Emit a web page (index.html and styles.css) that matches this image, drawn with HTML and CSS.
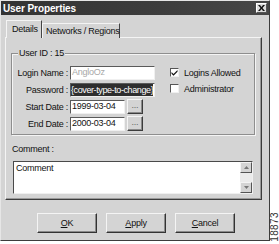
FILE: index.html
```html
<!DOCTYPE html>
<html>
<head>
<meta charset="utf-8">
<link rel="stylesheet" href="styles.css">
</head>
<body>
<div class="page">
  <div class="dialog">
    <div class="titlebar">
      <span class="title">User Properties</span>
      <span class="close">
        <svg width="7" height="6" viewBox="0 0 7 6"><path d="M0 0 L2 0 L3.5 2 L5 0 L7 0 L4.5 3 L7 6 L5 6 L3.5 4 L2 6 L0 6 L2.5 3 Z" fill="#111"/></svg>
      </span>
    </div>
    <div class="content">
      <div class="tabs">
        <div class="tab active">Details</div>
        <div class="tab">Networks / Regions</div>
      </div>
      <div class="panel">
        <div class="group">
          <span class="legend">User ID : 15</span>
          <div class="group-body">
            <div class="fields">
              <div class="row">
                <span class="lbl">Login Name :</span>
                <span class="input wide disabled">AngloOz</span>
              </div>
              <div class="row">
                <span class="lbl">Password :</span>
                <span class="input wide"><span class="sel">{cover-type-to-change}</span></span>
              </div>
              <div class="row">
                <span class="lbl">Start Date :</span>
                <span class="input date">1999-03-04</span>
                <span class="dots">...</span>
              </div>
              <div class="row">
                <span class="lbl">End Date :</span>
                <span class="input date">2000-03-04</span>
                <span class="dots">...</span>
              </div>
            </div>
            <div class="checks">
              <div class="check">
                <span class="box">
                  <svg width="7" height="7" viewBox="0 0 7 7"><path d="M0.5 3 L2.5 5 L6.5 1 L6.5 2.8 L2.5 6.8 L0.5 4.8 Z" fill="#111"/></svg>
                </span>
                <span>Logins Allowed</span>
              </div>
              <div class="check">
                <span class="box"></span>
                <span>Administrator</span>
              </div>
            </div>
          </div>
        </div>
        <div class="comment-lbl">Comment :</div>
        <div class="textarea">
          <div class="ta-text">Comment</div>
          <div class="scroll">
            <span class="arrow"><svg width="5" height="3" viewBox="0 0 5 3"><path d="M0 3 L2.5 0 L5 3 Z" fill="#777"/></svg></span>
            <span class="arrow"><svg width="5" height="3" viewBox="0 0 5 3"><path d="M0 0 L2.5 3 L5 0 Z" fill="#777"/></svg></span>
          </div>
        </div>
      </div>
      <div class="buttons">
        <span class="btn"><u>O</u>K</span>
        <span class="btn"><u>A</u>pply</span>
        <span class="btn"><u>C</u>ancel</span>
      </div>
    </div>
  </div>
  <div class="fignum"><span>18873</span></div>
</div>
</body>
</html>
```
FILE: styles.css
```css
* { box-sizing: border-box; }
html, body { margin: 0; padding: 0; background: #ffffff; }
body {
  font-family: "Liberation Sans", Arial, sans-serif;
  font-size: 9px;
  letter-spacing: -0.25px;
  color: #111;
}
.page { display: flex; width: 279px; height: 244px; }
.dialog {
  width: 270px;
  height: 241px;
  background: #d4d4d4;
  border: 1px solid;
  border-color: #e6e6e6 #3c3c3c #3c3c3c #e6e6e6;
  display: flex;
  flex-direction: column;
}
.titlebar {
  height: 14px;
  background: linear-gradient(90deg, #333 0%, #3d3d3d 60%, #474747 100%);
  display: flex;
  align-items: center;
  justify-content: space-between;
  padding: 0 2px 0 2px;
}
.title { color: #fff; font-weight: bold; font-size: 10px; letter-spacing: -0.1px; }
.close {
  width: 11px; height: 10px;
  background: #dcdcdc;
  border: 1px solid; border-color: #fff #555 #555 #fff;
  display: flex; align-items: center; justify-content: center;
}
.content { flex: 1; padding: 5px 7px 0 4px; display: flex; flex-direction: column; }
.tabs { display: flex; align-items: flex-end; height: 18px; margin-bottom: -1px; position: relative; z-index: 1; }
.tab {
  height: 15px;
  padding: 1px 3px 0 3px;
  border: 1px solid; border-bottom: none;
  border-color: #f4f4f4 #444 transparent #f4f4f4;
  line-height: 12px;
  background: #d4d4d4;
  white-space: nowrap;
}
.tab.active { height: 18px; margin-left: 1px; width: 36px; padding: 2px 0 0 5px; line-height: 12px; }
.tab:not(.active) { width: 78px; padding-left: 3px; }
.panel {
  height: 163px;
  border: 1px solid;
  border-color: #f4f4f4 #3c3c3c #3c3c3c #f4f4f4;
  box-shadow: inset -1px -1px 0 #9a9a9a;
  padding: 15px 6px 0 5px;
  display: flex; flex-direction: column;
}
.group {
  height: 82px;
  border: 1px solid #8e8e8e;
  box-shadow: inset 1px 1px 0 #f4f4f4, 1px 1px 0 #f4f4f4;
  padding: 0 0 0 1px;
}
.legend {
  display: inline-block;
  margin: -7px 0 0 5px;
  padding: 0 1px;
  background: #d4d4d4;
  line-height: 12px;
  vertical-align: top;
}
.group-body { display: flex; padding-top: 2px; }
.fields { display: flex; flex-direction: column; gap: 4px; width: 156px; }
.row { display: flex; align-items: center; height: 13px; }
.lbl { width: 55px; text-align: right; margin-right: 2px; white-space: nowrap; }
.input {
  height: 14px;
  background: #fff;
  border: 1px solid; border-color: #5a5a5a #f0f0f0 #f0f0f0 #5a5a5a;
  line-height: 11px;
  padding: 0 1px;
  white-space: nowrap; overflow: hidden;
}
.wide { width: 85px; }
.date { width: 55px; }
.disabled { color: #a8a8a8; }
.sel { background: #2e2e2e; color: #fff; display: inline-block; height: 12px; line-height: 12px; margin-left: -1px; letter-spacing: -0.4px; }
.dots {
  width: 16px; height: 15px; margin-left: 2px;
  border: 1px solid; border-color: #f4f4f4 #3c3c3c #3c3c3c #f4f4f4;
  box-shadow: inset -1px -1px 0 #8a8a8a;
  text-align: center; line-height: 10px; font-size: 9px; color: #666;
}
.checks { display: flex; flex-direction: column; gap: 5px; margin-left: 1px; padding-top: 1px; }
.check { display: flex; align-items: center; height: 11px; gap: 5px; white-space: nowrap; }
.box {
  width: 9px; height: 9px;
  background: #fff;
  border: 1px solid; border-color: #555 #f0f0f0 #f0f0f0 #555;
  display: flex; align-items: center; justify-content: center;
}
.comment-lbl { margin: 8px 0 0 1px; line-height: 12px; }
.textarea {
  margin: 6px 0 0 2px;
  width: 240px; height: 33px;
  background: #fff;
  border: 1px solid; border-color: #4a4a4a #f0f0f0 #f0f0f0 #4a4a4a;
  display: flex;
}
.ta-text { flex: 1; padding: 1px 2px; line-height: 10px; }
.scroll { width: 12px; display: flex; flex-direction: column; justify-content: space-between; background: #ebebeb; }
.arrow {
  height: 11px;
  background: #d4d4d4;
  border: 1px solid; border-color: #f4f4f4 #555 #555 #f4f4f4;
  display: flex; align-items: center; justify-content: center;
}
.buttons { display: flex; gap: 9px; margin: 13px 0 0 32px; }
.btn {
  width: 60px; height: 20px;
  border: 1px solid; border-color: #f4f4f4 #333 #333 #f4f4f4;
  box-shadow: inset -1px -1px 0 #8a8a8a;
  display: flex; align-items: center; justify-content: center;
}
.fignum { flex: 1; display: flex; align-items: flex-end; justify-content: center; padding-bottom: 2px; }
.fignum span { writing-mode: vertical-rl; transform: rotate(180deg); font-size: 10px; color: #333; line-height: 8px; letter-spacing: 0.4px; }
```
